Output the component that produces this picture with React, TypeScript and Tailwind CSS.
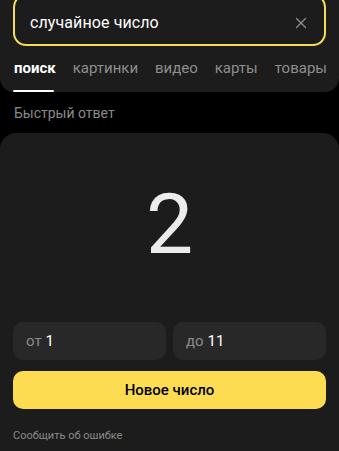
import { X } from "lucide-react";

const tabs = ["поиск", "картинки", "видео", "карты", "товары"];

export default function App() {
  return (
    <div
      className="w-[339px] h-[451px] overflow-hidden bg-black text-white"
      style={{ fontFamily: "Roboto, 'Noto Sans', sans-serif" }}
    >
      <div className="bg-[#1c1c1c] rounded-b-[14px]">
        <div className="px-[13px]">
          <div className="-mt-[6px] h-[52px] border-2 border-[#f5dc5a] rounded-[13px] flex items-center pl-[15px] pr-[14px] pt-[6px]">
            <span className="flex-1 text-[16px] text-white tracking-[0.1px]">случайное число</span>
            <X size={18} strokeWidth={1.8} className="text-[#8a8a8a]" />
          </div>
        </div>
        <div className="flex px-[14px] mt-[11px] h-[35px] text-[15px] justify-between pr-[12px]">
          {tabs.map((t, i) => (
            <div key={t} className="relative">
              <span className={i === 0 ? "font-bold text-white" : "text-[#8e8e8e]"}>{t}</span>
              {i === 0 && (
                <div className="absolute left-[-1px] right-[2px] bottom-[0px] h-[2px] bg-white rounded-full" />
              )}
            </div>
          ))}
        </div>
      </div>

      <div className="px-[14px] pt-[11px] pb-[9px] text-[14px] text-[#8a8a8a]">Быстрый ответ</div>

      <div className="bg-[#1c1c1c] rounded-t-[16px] h-[330px] px-[13px] pt-[22px]">
        <div className="h-[140px] flex items-center justify-center text-[84px] font-normal text-[#ececec] leading-none">
          2
        </div>
        <div className="flex gap-[7px] mt-[27px]">
          <div className="flex-1 h-[38px] rounded-[10px] bg-[#282828] flex items-center px-[13px] text-[15px]">
            <span className="text-[#8a8a8a] mr-[4px]">от</span>
            <span className="text-white">1</span>
          </div>
          <div className="flex-1 h-[38px] rounded-[10px] bg-[#282828] flex items-center px-[13px] text-[15px]">
            <span className="text-[#8a8a8a] mr-[4px]">до</span>
            <span className="text-white">11</span>
          </div>
        </div>
        <button className="mt-[11px] w-full h-[38px] rounded-[10px] bg-[#fddc51] text-black text-[15px] font-medium flex items-center justify-center">
          Новое число
        </button>
        <div className="mt-[19px] text-[11px] text-[#8a8a8a]">Сообщить об ошибке</div>
      </div>
    </div>
  );
}
